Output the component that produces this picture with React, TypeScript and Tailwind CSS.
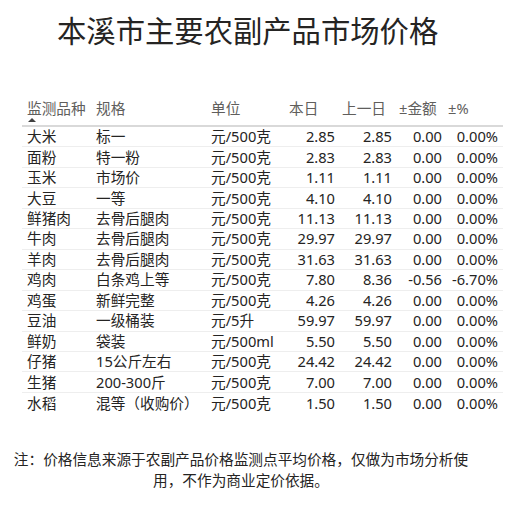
const rows = [
  ["大米", "标一", "元/500克", "2.85", "2.85", "0.00", "0.00%"],
  ["面粉", "特一粉", "元/500克", "2.83", "2.83", "0.00", "0.00%"],
  ["玉米", "市场价", "元/500克", "1.11", "1.11", "0.00", "0.00%"],
  ["大豆", "一等", "元/500克", "4.10", "4.10", "0.00", "0.00%"],
  ["鲜猪肉", "去骨后腿肉", "元/500克", "11.13", "11.13", "0.00", "0.00%"],
  ["牛肉", "去骨后腿肉", "元/500克", "29.97", "29.97", "0.00", "0.00%"],
  ["羊肉", "去骨后腿肉", "元/500克", "31.63", "31.63", "0.00", "0.00%"],
  ["鸡肉", "白条鸡上等", "元/500克", "7.80", "8.36", "-0.56", "-6.70%"],
  ["鸡蛋", "新鲜完整", "元/500克", "4.26", "4.26", "0.00", "0.00%"],
  ["豆油", "一级桶装", "元/5升", "59.97", "59.97", "0.00", "0.00%"],
  ["鲜奶", "袋装", "元/500ml", "5.50", "5.50", "0.00", "0.00%"],
  ["仔猪", "15公斤左右", "元/500克", "24.42", "24.42", "0.00", "0.00%"],
  ["生猪", "200-300斤", "元/500克", "7.00", "7.00", "0.00", "0.00%"],
  ["水稻", "混等（收购价）", "元/500克", "1.50", "1.50", "0.00", "0.00%"],
];

const font = "font-['Noto_Sans','Noto_Sans_CJK_SC',sans-serif]";

export default function App() {
  return (
    <div className={`w-[528px] h-[505px] bg-white overflow-hidden ${font}`}>
      <div className="pt-[11px] pl-[57px] text-[29.33px] leading-[40px] text-[#252423] whitespace-nowrap">
        本溪市主要农副产品市场价格
      </div>

      <div className="mt-[47px] ml-[22px] w-[481px] text-[14.67px]">
        <div className="grid grid-cols-[69px_115px_78px_54px_57px_50px_58px] border-b-2 border-[#d9d9d9] text-[#605e5c] leading-[20px] h-[29px]">
          <div className="pl-[5px] flex flex-col">
            <span>监测品种</span>
            <svg width="8" height="4" viewBox="0 0 8 4" className="ml-[1px] mt-[0px]">
              <path d="M0 4 L4 0 L8 4 Z" fill="#404040" />
            </svg>
          </div>
          <div className="pl-[5px]">规格</div>
          <div className="pl-[5px]">单位</div>
          <div className="pl-[5px]">本日</div>
          <div className="pl-[4px]">上一日</div>
          <div className="pl-[4px]">±金额</div>
          <div className="pl-[3px]">±%</div>
        </div>

        {rows.map((r, i) => (
          <div
            key={i}
            className={`grid grid-cols-[69px_115px_78px_54px_57px_50px_58px] items-center h-[20.46px] text-[#252423] leading-[19px] whitespace-nowrap ${
              i < rows.length - 1 ? "border-b border-[#eeeeee]" : ""
            }`}
          >
            <div className="pl-[5px]">{r[0]}</div>
            <div className="pl-[5px]">{r[1]}</div>
            <div className="pl-[5px]">{r[2]}</div>
            <div className="pr-[3px] text-right">{r[3]}</div>
            <div className="pr-[3px] text-right">{r[4]}</div>
            <div className="pr-[3px] text-right">{r[5]}</div>
            <div className="pr-[5px] text-right">{r[6]}</div>
          </div>
        ))}
      </div>

      <div className="mt-[36px] ml-[10px] w-[462px] text-center text-[14.67px] leading-[21px] text-[#252423]">
        注：价格信息来源于农副产品价格监测点平均价格，仅做为市场分析使用，不作为商业定价依据。
      </div>
    </div>
  );
}
